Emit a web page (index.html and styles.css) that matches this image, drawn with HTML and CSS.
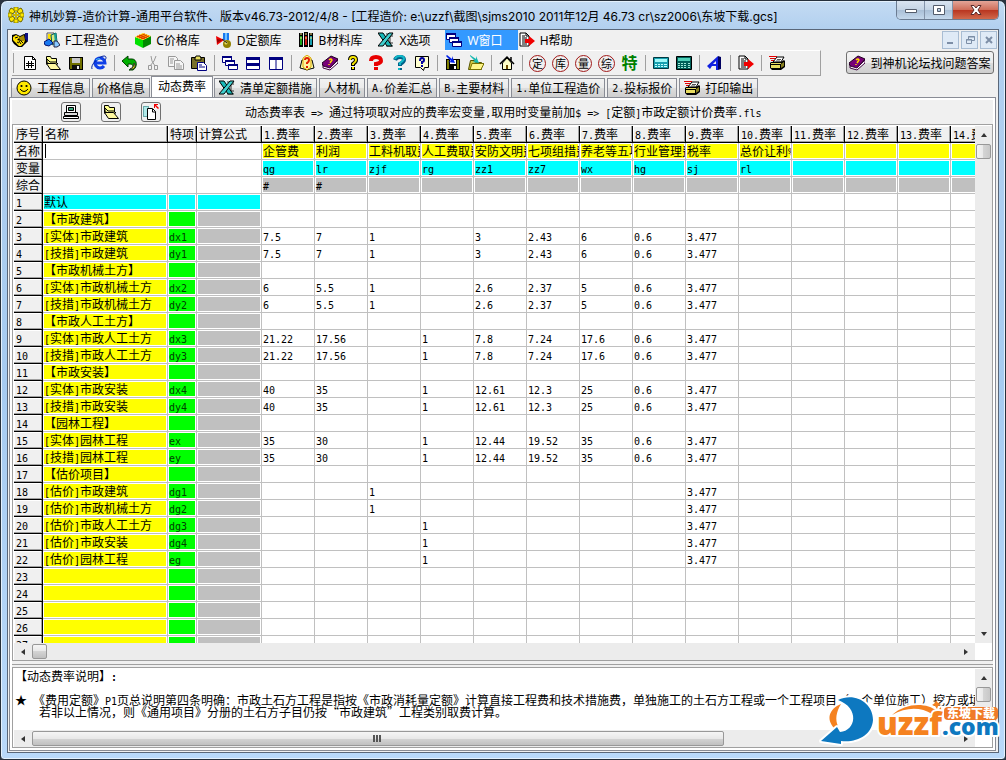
FILE: index.html
```html
<!DOCTYPE html>
<html lang="zh-CN">
<head>
  <meta charset="UTF-8">
  <title>神机妙算-造价计算</title>
  <link rel="stylesheet" href="styles.css">
</head>
<body>

<svg class="sprite" xmlns="http://www.w3.org/2000/svg">
  <symbol id="i-logo" viewBox="0 0 16 16"><g fill="#ffe800" stroke="#6b6500"><path d="M3 1l4 2-1 3-3 1-2-3zM9 3l4-2 2 3-2 3-3-1zM1 12l2-3 3 1 1 3-4 2zM10 10l3-1 2 3-2 3-4-2z"/></g><path d="M6 0h4v4H6zM6 12h4v4H6zM0 6h4v4H0zM12 6h4v4h-4z" fill="#ffe800" stroke="#8a8200"/><path d="M7 5h2v6H7zM5 7h6v2H5z" fill="#cdb900"/></symbol>
  <symbol id="i-hands" viewBox="0 0 16 16"><path d="M0 3l4-1 4 2 4-2 4 1v6l-3 3-3 3H6l-4-3-2-3z" fill="#000"/><path d="M1 5l3-2 4 2-3 3 4 1 4-1-1 3-3 3H7l-3-3-3-3z" fill="#ffe000"/><path d="M8 5l4-2 1 5-3 1-3-2z" fill="#a88c00"/><path d="M13 1h3v9l-3-3z" fill="#101080"/><path d="M5 10l2 1M7 9l2 3M9 9l2 2M3 6l3-1" stroke="#000"/></symbol>
  <symbol id="i-blocks" viewBox="0 0 16 16"><path d="M3 1h7v10H3z" fill="#fff" stroke="#555"/><path d="M4 2h3v8H4z" fill="#ffe000"/><path d="M7 3l5-2 1 9-5 3z" fill="#d8e880" stroke="#055"/><path d="M10 2l2-1 1 9-2 1z" fill="#18a098"/><path d="M0 10l5-3 4 4-4 3-4-1z" fill="#1878f0" stroke="#001070"/><path d="M10 9h3l3 4-3 2h-3z" fill="#88c8ff" stroke="#224"/></symbol>
  <symbol id="i-cube" viewBox="0 0 16 16"><path d="M0 5l8 3v8l-8-4z" fill="#00e000"/><path d="M8 8l8-4v8l-8 4z" fill="#008800"/><path d="M0 5l8-4 8 3-8 4z" fill="#ffcc00"/><path d="M2 5l8-3M4 6l8-3M6 7l8-3M4 3l8 3M2 4l8 3" stroke="#e03000"/></symbol>
  <symbol id="i-shapes" viewBox="0 0 16 16"><path d="M7 1h6v7H7z" fill="#1878f0"/><path d="M9 1h2v7H9z" fill="#70c0ff"/><path d="M0 4l8 4-7 5z" fill="#f00000"/><path d="M1 7l5 1-5 3z" fill="#900"/><circle cx="11" cy="12" r="4" fill="#908000"/><circle cx="10" cy="11" r="1.5" fill="#e8dc60"/><path d="M6 7l5 4" stroke="#222"/></symbol>
  <symbol id="i-books" viewBox="0 0 16 16"><path d="M1 1h4v14H1zM6 0h4v15H6zM11 1h4v14h-4z" fill="#000"/><path d="M2 4h2v9H2z" fill="#18a018"/><path d="M7 4h2v9H7z" fill="#d01010"/><path d="M12 4h2v9h-2z" fill="#18a0b0"/><path d="M2 2h2M7 2h2M12 2h2M2 6h2M7 6h2M12 6h2" fill="none" stroke="#ffe080"/></symbol>
  <symbol id="i-excel" viewBox="0 0 16 16"><path d="M5 1h10v2L9 8l6 5v2H5z" fill="#d8f4f4"/><path d="M8 2h7M9 4h6M10 11h5M8 14h7M12 2v11" stroke="#333"/><path d="M0 1h5l9 13H9z" fill="#18b8b8" stroke="#000"/><path d="M11 1h4L5 14H0z" fill="#40d0d0" stroke="#000"/></symbol>
  <symbol id="i-cascade" viewBox="0 0 16 16"><g fill="#fff" stroke="#000080"><path d="M.5 1.500h9v6h-9z"/><path d="M3.500 5.500h9v5h-9z"/><path d="M6.500 9.500h9v5h-9z"/></g><path d="M0 1h10v2H0zM3 5h10v2H3zM6 9h10v2H6z" fill="#000080"/></symbol>
  <symbol id="i-exit" viewBox="0 0 16 16"><path d="M1 1h6l3 3v10H1z" fill="#fff" stroke="#000"/><path d="M7 1v3h3M3 4h3M3 6h5M3 8h4M3 10h4M3 12h5" stroke="#000" fill="none"/><path d="M6 7h4V4l6 5-6 5v-3H6z" fill="#f00000"/></symbol>
  <symbol id="i-new" viewBox="0 0 16 16"><path d="M2.500 1.500h8l3 3v10h-11z" fill="#fff" stroke="#000"/><path d="M10.500 1v3.500h3M6.500 6v7M9.500 6v7M4 8.500h8M4 10.500h8" stroke="#000" fill="none"/></symbol>
  <symbol id="i-folder" viewBox="0 0 16 16"><path d="M1.500 9.500v-8h4l1 2h5v4" fill="#ffff90" stroke="#000"/><path d="M2 4l3 3h6l2 2H7L2 8z" fill="#ffff90" stroke="#000"/><path d="M5.500 14.500l-4-6h9l5 6z" fill="#fff8a0" stroke="#000"/></symbol>
  <symbol id="i-save" viewBox="0 0 16 16"><path d="M1 2h14v13H2l-1-1z" fill="#000"/><path d="M2 3h2v5h8V3h2v11H2z" fill="#707000"/><path d="M4 3h8v5H4z" fill="#c8c8c8"/><path d="M4 10h8v4H4z" fill="#111"/><path d="M9 11h2v3H9z" fill="#eee"/></symbol>
  <symbol id="i-ie" viewBox="0 0 16 16"><path d="M13 11a5 5 0 1 1 1-3H5" fill="none" stroke="#1040e8" stroke-width="3"/><path d="M1 14C-1 10 8 1 13 1c3 0 2 3 1 4" fill="none" stroke="#0020a0"/><path d="M5 5q2-2 4-1" stroke="#50d8ff" fill="none"/></symbol>
  <symbol id="i-undo" viewBox="0 0 16 16"><path d="M0 6l6-5v3h4c5 0 6 8 1 11H7c5-2 5-6 1-6H6v3z" fill="#00b000" stroke="#004000"/><path d="M12 8c2 3 1 5-1 6H8c3-1 4-3 4-6z" fill="#e8e000" stroke="#333"/></symbol>
  <symbol id="i-cut" viewBox="0 0 16 16"><g fill="none" stroke="#999"><path d="M6 1l1 5 3 5M11 1l-2 5-4 5"/><path d="M3.500 10.500h3v4h-3zM9.500 10.500h3v4h-3z"/></g></symbol>
  <symbol id="i-copy" viewBox="0 0 16 16"><g fill="#f5f5f5" stroke="#999"><path d="M.5 1.500h7l2 2v8h-9z"/><path d="M6.500 5.500h6l3 3v6h-9z"/><path d="M2 4h4M2 6h3M2 8h3M8 9h4M8 11h6M8 13h6"/></g></symbol>
  <symbol id="i-paste" viewBox="0 0 16 16"><path d="M.5 2.500h13v11H.5z" fill="#787028" stroke="#000"/><path d="M4 3l1-2h4l1 2v2H4z" fill="#e8e060" stroke="#000"/><path d="M6.500 7.500h6l3 3v5h-9z" fill="#fff" stroke="#000080"/><path d="M8 10h3M8 12h6" stroke="#000080"/></symbol>
  <symbol id="i-rows" viewBox="0 0 16 16"><path d="M1.500 2.500h13v12h-13z" fill="#fff" stroke="#000080"/><path d="M1 2h14v3H1zM1 8h14v3H1z" fill="#000080"/></symbol>
  <symbol id="i-cols" viewBox="0 0 16 16"><path d="M1.500 2.500h13v12h-13zM8 3v11" fill="#fff" stroke="#000080"/><path d="M1 2h14v3H1z" fill="#000080"/></symbol>
  <symbol id="i-bookq" viewBox="0 0 16 16"><path d="M1 13l2-8h2l3 8 3-8h2l2 8-4 1-3 1-3-1z" fill="#ffffb0" stroke="#000"/><path d="M4 12V3l4-3 4 3v9l-4 3z" fill="#fff6a0" stroke="#d8a800"/><path d="M6 5q0-2 2-2t2 2q0 2-2 3v1M8 11v2" stroke="#e02000" stroke-width="2" fill="none"/></symbol>
  <symbol id="i-book" viewBox="0 0 16 16"><path d="M0 8l9-7 7 3-8 9-7-2z" fill="#780078" stroke="#200020"/><path d="M1 11l7 2 8-8v3l-8 7-7-2z" fill="#fff" stroke="#400040"/><path d="M7 5q2-2 3 0L8 8M7 9v1" stroke="#ffd800" stroke-width="1.500" fill="none"/></symbol>
  <symbol id="i-q-yellow" viewBox="0 0 16 16"><path d="M5 5q0-3 3-3t3 3q0 2-3 4v2M8 12v3" fill="none" stroke="#000" stroke-width="4"/><path d="M5 5q0-3 3-3t3 3q0 2-3 4v1M8 12v2" fill="none" stroke="#f8e800" stroke-width="2"/></symbol>
  <symbol id="i-q-red" viewBox="0 0 16 16"><path d="M3 6q0-4 5-4t5 4q0 2-5 3v2M8 12v3" fill="none" stroke="#e80000" stroke-width="4"/></symbol>
  <symbol id="i-q-cyan" viewBox="0 0 16 16"><path d="M4 5q1-3 5-3t4 3q0 2-4 4v2M9 13v2" fill="none" stroke="#006088" stroke-width="4"/><path d="M4 4q1-3 5-3t4 3q-1 2-4 4v2M8 13v2" fill="none" stroke="#10b8c8" stroke-width="2"/></symbol>
  <symbol id="i-q-page" viewBox="0 0 16 16"><path d="M1.500 1.500h13v11h-4l-1 3-3-3h-5z" fill="#ffffd0" stroke="#000"/><path d="M6 6q0-3 2-3t2 2q0 2-2 2v2M8 10v2" fill="none" stroke="#0000a0" stroke-width="2"/></symbol>
  <symbol id="i-savein" viewBox="0 0 16 16"><path d="M1 4h14v11H1z" fill="#000"/><path d="M2 5h2v9H2zM12 5h2v9h-2z" fill="#808000"/><path d="M5 5h6v4H5z" fill="#fff"/><path d="M9 11h2v3H9z" fill="#fff"/><path d="M2 0l5 4V1l3 7-7-1 3-1-5-5z" fill="#0020e8"/></symbol>
  <symbol id="i-openin" viewBox="0 0 16 16"><path d="M0.500 14.500l2-9h4l1 2h6v7z" fill="#d8c840" stroke="#555500"/><path d="M2 14.500l2-6h12l-3 6z" fill="#fff68a" stroke="#777000"/><path d="M2 0l6 4V1l3 7-7-1 3-1-5-5z" fill="#18b8b0"/></symbol>
  <symbol id="i-home" viewBox="0 0 16 16"><path d="M3.500 8v6.500h9V8L8 3z" fill="#ffffc8" stroke="#000"/><path d="M1 9l7-7 7 7M12 2v4" fill="none" stroke="#000" stroke-width="1.500"/><path d="M7 10h2v4H7z" fill="#705000"/></symbol>
  <symbol id="i-calc-s" viewBox="0 0 16 16"><path d="M.5 2.500h15v11H.5z" fill="#18a0b0" stroke="#003840"/><path d="M2 4h12v3H2z" fill="#a0f8f8"/><path d="M2 9.500h2M5 9.500h2M8 9.500h2M11 9.500h3M2 11.500h2M5 11.500h2M8 11.500h2M11 11.500h3" stroke="#c0ffff"/></symbol>
  <symbol id="i-calc" viewBox="0 0 16 16"><path d="M.5 1.500h15v13H.5z" fill="#006058" stroke="#000"/><path d="M2 3h12v3H2z" fill="#50d0b8"/><path d="M2 8.500h2M5 8.500h2M8 8.500h2M12 8.500h2M2 10.500h2M5 10.500h2M8 10.500h2M12 10.500h2M2 12.500h2M5 12.500h2M8 12.500h2M12 12.500h2" stroke="#a0e8d8"/></symbol>
  <symbol id="i-a" viewBox="0 0 16 16"><path d="M0 11L11 1v14H9v-4H5l-2 3z" fill="#1020e0"/><path d="M11 1l3 1v12l-3 1z" fill="#000060"/><path d="M6 9l3-3v3z" fill="#f0f0f0"/></symbol>
  <symbol id="i-print" viewBox="0 0 16 16"><path d="M0 1.500h8M1 3.500h6M2 5.500h4" stroke="#e00000"/><path d="M4 7l4-5h7l-3 5z" fill="#fff" stroke="#000"/><path d="M8 4.500h4M7 6h4" stroke="#555"/><path d="M2 7h10l3-2 1 1v6l-4 3H3l-2-2V8z" fill="#000"/><path d="M2 8h10v1H2zM2 10h9v3H2z" fill="#e8dc60"/><path d="M12 9l3-2v4l-3 2z" fill="#888020"/></symbol>
  <symbol id="i-smile" viewBox="0 0 16 16"><circle cx="8" cy="8" r="7" fill="#ffe800" stroke="#000"/><circle cx="5.500" cy="6" r="1.100"/><circle cx="10.500" cy="6" r="1.100"/><path d="M4 9q4 5 8 0" fill="none" stroke="#000"/></symbol>
  <symbol id="i-printer" viewBox="0 0 16 16"><path d="M3.500 1.500h9v7h-9z" fill="#fff" stroke="#000"/><path d="M5.500 3.500h5v3h-5z" fill="#40a880" stroke="#000"/><path d="M1.500 8.500h13v3h-13z" fill="#ddd" stroke="#000"/><path d="M.5 12.500h15v2H.5z" fill="#fff" stroke="#000"/></symbol>
  <symbol id="i-pages" viewBox="0 0 16 16"><path d="M.5 2.500h5v10h-5z" fill="#b0e8e8" stroke="#066" stroke-dasharray="1 1"/><path d="M4.500 4.500h5l3 3v8h-8z" fill="#fff" stroke="#000"/><path d="M9.500 5v3h3" fill="none" stroke="#000"/><path d="M11 0h4v1h-2l3 3-1 1-3-3v2h-1z" fill="#f00000"/></symbol>
</svg>

<div class="window">
  <header class="titlebar">
    <svg class="icon"><use href="#i-logo"/></svg>
    <h1>神机妙算-造价计算-通用平台软件、版本v46.73-2012/4/8 - [工程造价: e:\uzzf\截图\sjms2010 2011年12月 46.73 cr\sz2006\东坡下载.gcs]</h1>
    <div class="caption">
      <button aria-label="最小化"><svg viewBox="0 0 14 12"><path d="M1.500 5.500h11v3h-11z" fill="#fff" stroke="#535c6b"/></svg></button>
      <button aria-label="最大化"><svg viewBox="0 0 14 12"><path d="M1.500 1.500h11v9h-11zM5.500 4.500h3v3h-3z" fill="#fff" stroke="#535c6b" fill-rule="evenodd"/></svg></button>
      <button class="close" aria-label="关闭"><svg viewBox="0 0 14 12"><path d="M2 1.500h3l2 2.500 2-2.500h3L9 6l3 4.500H9L7 8l-2 2.500H2L5 6z" fill="#fff" stroke="#5b2a2a"/></svg></button>
    </div>
  </header>

  <main class="client">
    <nav class="menu">
      <button aria-label="系统"><svg class="icon"><use href="#i-hands"/></svg></button>
      <button><svg class="icon"><use href="#i-blocks"/></svg>F工程造价</button>
      <button><svg class="icon"><use href="#i-cube"/></svg>C价格库</button>
      <button><svg class="icon"><use href="#i-shapes"/></svg>D定额库</button>
      <button><svg class="icon"><use href="#i-books"/></svg>B材料库</button>
      <button><svg class="icon"><use href="#i-excel"/></svg>X选项</button>
      <button class="open"><svg class="icon"><use href="#i-cascade"/></svg>W窗口</button>
      <button><svg class="icon"><use href="#i-exit"/></svg>H帮助</button>
      <div class="mdi">
        <button aria-label="最小化子窗口"><svg viewBox="0 0 10 10"><path d="M1 7h6v2H1z" fill="#7d8ea6"/></svg></button>
        <button aria-label="还原子窗口"><svg viewBox="0 0 10 10"><path d="M3.500 4V1.500h6v4H7M3 2h7M1.500 4.500h5v4h-5zM1 5h6" fill="none" stroke="#7d8ea6"/></svg></button>
        <button aria-label="关闭子窗口"><svg viewBox="0 0 10 10"><path d="M2 2l6 6M8 2L2 8" fill="none" stroke="#7d8ea6" stroke-width="2"/></svg></button>
      </div>
    </nav>

    <div class="toolrow">
      <div class="toolbar">
        <button aria-label="新建"><svg class="icon"><use href="#i-new"/></svg></button>
        <button aria-label="打开"><svg class="icon"><use href="#i-folder"/></svg></button>
        <button aria-label="保存"><svg class="icon"><use href="#i-save"/></svg></button>
        <button aria-label="浏览器"><svg class="icon"><use href="#i-ie"/></svg></button>
        <span class="sep"></span>
        <button aria-label="撤销"><svg class="icon"><use href="#i-undo"/></svg></button>
        <button aria-label="剪切"><svg class="icon"><use href="#i-cut"/></svg></button>
        <button aria-label="复制"><svg class="icon"><use href="#i-copy"/></svg></button>
        <button aria-label="粘贴"><svg class="icon"><use href="#i-paste"/></svg></button>
        <span class="sep"></span>
        <button aria-label="层叠"><svg class="icon"><use href="#i-cascade"/></svg></button>
        <button aria-label="横排"><svg class="icon"><use href="#i-rows"/></svg></button>
        <button aria-label="竖排"><svg class="icon"><use href="#i-cols"/></svg></button>
        <span class="sep"></span>
        <button aria-label="教程"><svg class="icon"><use href="#i-bookq"/></svg></button>
        <button aria-label="手册"><svg class="icon"><use href="#i-book"/></svg></button>
        <button aria-label="提示"><svg class="icon"><use href="#i-q-yellow"/></svg></button>
        <button aria-label="疑问"><svg class="icon"><use href="#i-q-red"/></svg></button>
        <button aria-label="帮助"><svg class="icon"><use href="#i-q-cyan"/></svg></button>
        <button aria-label="说明"><svg class="icon"><use href="#i-q-page"/></svg></button>
        <span class="sep"></span>
        <button aria-label="存入"><svg class="icon"><use href="#i-savein"/></svg></button>
        <button aria-label="取出"><svg class="icon"><use href="#i-openin"/></svg></button>
        <span class="sep"></span>
        <button aria-label="主页"><svg class="icon"><use href="#i-home"/></svg></button>
        <span class="sep"></span>
        <button><span class="stamp">定</span></button>
        <button><span class="stamp">库</span></button>
        <button><span class="stamp">量</span></button>
        <button><span class="stamp">综</span></button>
        <button><span class="special">特</span></button>
        <span class="sep"></span>
        <button aria-label="小计算器"><svg class="icon"><use href="#i-calc-s"/></svg></button>
        <button aria-label="计算器"><svg class="icon"><use href="#i-calc"/></svg></button>
        <span class="sep"></span>
        <button aria-label="字体"><svg class="icon"><use href="#i-a"/></svg></button>
        <span class="sep"></span>
        <button aria-label="退出"><svg class="icon"><use href="#i-exit"/></svg></button>
        <span class="sep"></span>
        <button aria-label="打印"><svg class="icon"><use href="#i-print"/></svg></button>
      </div>
      <button class="forum"><svg class="icon"><use href="#i-book"/></svg>到神机论坛找问题答案</button>
    </div>

    <div class="tabs">
      <button><svg class="icon"><use href="#i-smile"/></svg>工程信息</button>
      <button>价格信息</button>
      <button class="active">动态费率</button>
      <button><svg class="icon"><use href="#i-excel"/></svg>清单定额措施</button>
      <button>人材机</button>
      <button><span class="half">A.</span>价差汇总</button>
      <button><span class="half">B.</span>主要材料</button>
      <button><span class="half">1.</span>单位工程造价</button>
      <button><span class="half">2.</span>投标报价</button>
      <button><svg class="icon"><use href="#i-print"/></svg>打印输出</button>
    </div>

    <section class="page">
      <div class="pagebar">
        <button aria-label="打印费率"><svg class="icon"><use href="#i-printer"/></svg></button>
        <button aria-label="打开费率"><svg class="icon"><use href="#i-folder"/></svg></button>
        <button aria-label="复制费率"><svg class="icon"><use href="#i-pages"/></svg></button>
        <p>动态费率表<span class="half"> =&gt; </span>通过特项取对应的费率宏变量<span class="half">,</span>取用时变量前加<span class="half">$ =&gt; [</span>定额<span class="half">]</span>市政定额计价费率<span class="half">.fls</span></p>
      </div>

      <div class="panel gridpanel">
        <div class="view"><table id="rates"></table></div>
        <div class="vscroll">
          <button class="up" aria-label="上"></button><i class="thumb"></i><button class="down" aria-label="下"></button>
        </div>
        <div class="hscroll">
          <button class="left" aria-label="左"></button><i class="thumb"></i><button class="right" aria-label="右"></button>
        </div>
      </div>

      <div class="splitter"></div>

      <div class="panel notes">
        <div class="view text"><p>【动态费率说明】<b class="half">:</b></p>
          <p class="gap">★<span class="half"> </span>《费用定额》<span class="half">P1</span>页总说明第四条明确：市政土石方工程是指按《市政消耗量定额》计算直接工程费和技术措施费，单独施工的土石方工程或一个工程项目（一个单位施工）挖方或填方</p>
          <p><span class="half">    </span>若非以上情况，则《通用项目》分册的土石方子目仍按“市政建筑”工程类别取费计算。</p>
        </div>
        <div class="vscroll">
          <button class="up" aria-label="上"></button><i class="thumb"></i><button class="down" aria-label="下"></button>
        </div>
        <div class="hscroll">
          <button class="left" aria-label="左"></button><i class="thumb wide"></i><button class="right" aria-label="右"></button>
        </div>
      </div>
    </section>
  </main>

  <a class="watermark" href="#" aria-label="uzzf.com">
    <svg viewBox="0 0 186 60">
      <g stroke="#fff" stroke-width="4" stroke-linejoin="round" paint-order="stroke">
        <path d="M17 39C9 30 12 20 24 15C19 23 18 31 21 37z" fill="#f58220"/>
        <path d="M21 11C38 3 56 14 56 31C55 46 40 54 24 52L24 55L4 52L20 38L23 43C39 42 43 19 21 11z" fill="#0d78c0"/>
        <path d="M75 26C88 14 109 13 120 22L124 18L125 30L111 29L115 25C104 18 89 18 75 26z" fill="#f58220"/>
      </g>
      <path d="M25 37C33 32 34 22 27 15C37 22 38 32 25 37z" fill="#fff"/>
      <text x="60" y="46" class="wm-orange">uzzf</text>
      <text x="125" y="46" class="wm-blue">.com</text>
      <rect x="127" y="18" width="54" height="13" rx="4" fill="#f07a28"/>
      <text x="130" y="29" class="wm-cn">东坡下载</text>
      <path d="M119 11l2 3 3 1-3 2-1 3-2-3-3-1 3-2z" fill="#f58220"/>
    </svg>
  </a>
</div>

<script src="grid.js"></script>
</body>
</html>
```
FILE: styles.css
```css
* {
  box-sizing: border-box;
}

body {
  margin: 0;
  background: #2b3340;
  font-family: "Noto Sans", "Noto Sans CJK SC", sans-serif;
  font-size: 12px;
  color: #000;
}

button {
  font: inherit;
  color: inherit;
  margin: 0;
  padding: 0;
  border: 0;
  background: none;
  display: flex;
  align-items: center;
  justify-content: center;
  white-space: nowrap;
}

p {
  margin: 0;
}

.sprite {
  display: none;
}

.icon {
  width: 16px;
  height: 16px;
  flex: none;
}

.half {
  font-family: "DejaVu Sans Mono", monospace;
  font-size: 10px;
  white-space: pre;
}

/* window frame */
.window {
  position: relative;
  display: flex;
  flex-direction: column;
  height: 100vh;
  padding: 0 6px 6px;
  border: 1px solid #26303c;
  border-radius: 7px 7px 4px 4px;
  background: linear-gradient(#c4dbf3, #b2d0ef 28px, #a6cbf1 50%, #b9d9fa);
  box-shadow: inset 0 0 0 1px #e4f1fd;
}

.titlebar {
  display: flex;
  align-items: center;
  height: 28px;
  flex: none;
  padding-left: 1px;
}

.titlebar h1 {
  flex: 1;
  min-width: 0;
  margin: 0 0 0 5px;
  font-family: Inter, "Noto Sans CJK SC", sans-serif;
  font-size: 12px;
  font-weight: normal;
  white-space: nowrap;
  overflow: hidden;
}

.caption {
  display: flex;
  align-self: flex-start;
  height: 19px;
  border: 1px solid #6b7c92;
  border-top: 0;
  border-radius: 0 0 5px 5px;
  overflow: hidden;
}

.caption button {
  width: 28px;
  border-right: 1px solid #8494aa;
  background: linear-gradient(#d9e4f0, #c3d3e4 50%, #a9bfd6 50%, #c4d8ec);
}

.caption svg {
  width: 14px;
  height: 12px;
}

.caption .close {
  width: 45px;
  border: 0;
  background: linear-gradient(#e3a598, #cf6c58 50%, #b8341f 50%, #d0694c);
}

.client {
  flex: 1;
  min-height: 0;
  display: flex;
  flex-direction: column;
  border: 1px solid #5a6779;
  background: #f0f0f0;
}

/* menu */
.menu {
  display: flex;
  height: 20px;
  flex: none;
  padding-left: 3px;
}

.menu > button {
  gap: 5px;
  padding: 0 15px 0 1px;
}

.menu .open {
  background: #3399ff;
  color: #fff;
}

.mdi {
  display: flex;
  gap: 2px;
  margin: 1px 1px 1px auto;
}

.mdi button {
  width: 17px;
  border: 1px solid #a9bdd3;
  background: #dfeaf6;
}

.mdi svg {
  width: 10px;
  height: 10px;
}

/* toolbar */
.toolrow {
  display: flex;
  justify-content: space-between;
  height: 26px;
  flex: none;
  padding: 0 4px;
}

.toolbar {
  display: flex;
  width: 809px;
  padding-left: 6px;
  border-top: 1px solid #fff;
  border-right: 1px solid #a0a0a0;
  border-bottom: 1px solid #a0a0a0;
  position: relative;
}

.toolbar::before {
  content: "";
  width: 1px;
  height: 20px;
  position: absolute;
  left: 1px;
  top: 2px;
  background: #a0a0a0;
}

.toolbar button {
  width: 23px;
}

.sep {
  width: 8px;
  margin: 4px 0;
  background: linear-gradient(#a0a0a0, #a0a0a0) 4px 0 / 1px 100% no-repeat;
}

.stamp {
  width: 17px;
  height: 17px;
  border: 1px solid #a01818;
  border-radius: 50%;
  font-size: 11px;
  line-height: 15px;
}

.special {
  color: #008000;
  font-size: 16px;
  line-height: 18px;
  font-weight: bold;
}

.forum {
  width: 148px;
  height: 23px;
  gap: 5px;
  margin-top: 1px;
  border: 1px solid #707070;
  border-radius: 3px;
  background: linear-gradient(#f4f4f4, #ebebeb 50%, #dddddd 50%, #cfcfcf);
}

/* tabs */
.tabs {
  display: flex;
  align-items: flex-end;
  gap: 2px;
  height: 21px;
  flex: none;
  padding-left: 3px;
}

.tabs button {
  height: 19px;
  padding: 0 4px;
  border: 1px solid #898c95;
  border-bottom: 0;
  background: linear-gradient(#f2f2f2, #ebebeb 50%, #dddddd 50%, #cfcfcf);
}

.tabs .icon {
  margin-right: 5px;
}

.tabs .active {
  height: 21px;
  margin: 0 -1px;
  padding: 0 6px 2px;
  background: #fff;
}

/* page */
.page {
  flex: 1;
  min-height: 0;
  display: flex;
  flex-direction: column;
  margin: 0 2px 1px 1px;
  padding: 2px;
  border: 1px solid #898c95;
  background: #fff;
}

.pagebar {
  display: flex;
  align-items: center;
  gap: 20px;
  height: 24px;
  flex: none;
  padding-left: 49px;
  background: #f0f0f0;
}

.pagebar button {
  width: 20px;
  height: 20px;
  border: 1px solid #707070;
  border-radius: 3px;
}

.pagebar p {
  margin-left: 64px;
  white-space: nowrap;
}

.panel {
  display: grid;
  grid-template-columns: minmax(0, 1fr) 17px;
  grid-template-rows: minmax(0, 1fr) 17px;
  padding: 1px 0 0 1px;
  border: 1px solid #a0a0a0;
  background: #fff;
}

.gridpanel {
  flex: 1;
  min-height: 0;
}

.view {
  overflow: hidden;
}

.splitter {
  height: 6px;
  flex: none;
  border-top: 3px solid #f0f0f0;
  border-bottom: 2px solid #f0f0f0;
  background: #a0a0a0;
}

.notes {
  height: 81px;
  flex: none;
}

.text {
  padding: 1px;
  font-family: "Noto Sans CJK SC", sans-serif;
  line-height: 12px;
  text-spacing-trim: space-all;
  white-space: nowrap;
}

.text p {
  height: 12px;
}

.text .gap {
  margin-top: 12px;
}

/* rate table */
#rates {
  table-layout: fixed;
  width: 990px;
  border-collapse: separate;
  border-spacing: 0;
  font-family: "Noto Sans CJK SC", sans-serif;
  text-spacing-trim: space-all;
}

.c-no { width: 29px; }
.c-name { width: 125px; }
.c-item { width: 29px; }
.c-formula { width: 65px; }
.c-rate { width: 53px; }

#rates th,
#rates td {
  height: 17px;
  padding: 1px;
  border-right: 1px solid #c0c0c0;
  border-bottom: 1px solid #c0c0c0;
  background-clip: content-box;
  font-weight: normal;
  line-height: 14px;
  text-align: left;
  white-space: nowrap;
  overflow: hidden;
}

#rates div {
  height: 14px;
}

#rates th {
  padding-left: 2px;
  border-color: #000;
  background: #f0f0f0;
  box-shadow: inset -1px -1px #a0a0a0, inset 1px 1px #fff;
}

#rates .yellow { background-color: #ff0; }
#rates .cyan { background-color: #0ff; }
#rates .green { background-color: #0f0; color: #004000; }
#rates .gray { background-color: #c0c0c0; }

#rates input {
  display: block;
  width: 100%;
  height: 14px;
  padding: 0;
  border: 0;
  border-left: 1px solid #000;
  margin-left: 1px;
  outline: 0;
  font: inherit;
}

/* scrollbars */
.vscroll,
.hscroll {
  display: flex;
  background: #ececec;
}

.vscroll {
  flex-direction: column;
  padding: 0 1px;
}

.vscroll button { height: 18px; }
.hscroll button { width: 18px; }
.vscroll .down { margin-top: auto; }
.hscroll .right { margin-left: auto; }

.vscroll button::before,
.hscroll button::before {
  content: "";
  border: 3px solid transparent;
}

.vscroll .up::before { border-top: 0; border-bottom: 4px solid #333; }
.vscroll .down::before { border-bottom: 0; border-top: 4px solid #333; }
.hscroll .left::before { border-left: 0; border-right: 4px solid #333; }
.hscroll .right::before { border-right: 0; border-left: 4px solid #333; }

.thumb {
  display: flex;
  align-items: center;
  justify-content: center;
  width: 15px;
  height: 15px;
  border: 1px solid #989898;
  border-radius: 2px;
  background: linear-gradient(90deg, #f5f5f5, #e8e8e8 50%, #d4d4d4 50%, #c8c8c8);
}

.hscroll .thumb {
  margin-top: 1px;
  background: linear-gradient(#f5f5f5, #e8e8e8 50%, #d4d4d4 50%, #c0c0c0);
}

.hscroll .wide {
  width: 72%;
}

.wide::before {
  content: "";
  width: 9px;
  height: 7px;
  background: repeating-linear-gradient(90deg, #555 0 2px, transparent 2px 3px);
}

/* site mark over the corner */
.watermark {
  position: absolute;
  right: 2px;
  bottom: 10px;
  width: 186px;
  height: 60px;
}

.watermark svg {
  display: block;
  overflow: visible;
}

.watermark text {
  font-family: "Open Sans", sans-serif;
  font-size: 31px;
  font-weight: 800;
  stroke: #fff;
  stroke-width: 4px;
  stroke-linejoin: round;
  paint-order: stroke;
}

.watermark .wm-orange { fill: #f58220; }
.watermark .wm-blue { fill: #0d78c0; font-size: 23px; }

.watermark .wm-cn {
  fill: #fff;
  stroke: none;
  font-family: "Noto Sans CJK SC", sans-serif;
  font-size: 12px;
}
```
FILE: grid.js
```js
const RATE_COLS = 14;
const ROWS = 27;

// leading rows under the header: label, fill, values
const heads = [
  ["名称", "yellow", ["企管费", "利润", "工料机取费", "人工费取费", "安防文明费", "七项组措费", "养老等五项", "行业管理费", "税率", "总价让利%"]],
  ["变量", "cyan", ["qg", "lr", "zjf", "rg", "zz1", "zz7", "wx", "hg", "sj", "rl"]],
  ["综合", "gray", ["#", "#"]]
];

const shiti = (a, b, c, d, e, f, g) => [a, b, c, d, e, f, g, "0.6", "3.477"];

const rows = [
  ["默认", "", []],
  ["【市政建筑】", "", []],
  ["[实体]市政建筑", "dx1", shiti("7.5", "7", "1", "", "3", "2.43", "6")],
  ["[技措]市政建筑", "dy1", shiti("7.5", "7", "1", "", "3", "2.43", "6")],
  ["【市政机械土方】", "", []],
  ["[实体]市政机械土方", "dx2", shiti("6", "5.5", "1", "", "2.6", "2.37", "5")],
  ["[技措]市政机械土方", "dy2", shiti("6", "5.5", "1", "", "2.6", "2.37", "5")],
  ["【市政人工土方】", "", []],
  ["[实体]市政人工土方", "dx3", shiti("21.22", "17.56", "", "1", "7.8", "7.24", "17.6")],
  ["[技措]市政人工土方", "dy3", shiti("21.22", "17.56", "", "1", "7.8", "7.24", "17.6")],
  ["【市政安装】", "", []],
  ["[实体]市政安装", "dx4", shiti("40", "35", "", "1", "12.61", "12.3", "25")],
  ["[技措]市政安装", "dy4", shiti("40", "35", "", "1", "12.61", "12.3", "25")],
  ["【园林工程】", "", []],
  ["[实体]园林工程", "ex", shiti("35", "30", "", "1", "12.44", "19.52", "35")],
  ["[技措]园林工程", "ey", shiti("35", "30", "", "1", "12.44", "19.52", "35")],
  ["【估价项目】", "", []],
  ["[估价]市政建筑", "dg1", ["", "", "1", "", "", "", "", "", "3.477"]],
  ["[估价]市政机械土方", "dg2", ["", "", "1", "", "", "", "", "", "3.477"]],
  ["[估价]市政人工土方", "dg3", ["", "", "", "1", "", "", "", "", "3.477"]],
  ["[估价]市政安装", "dg4", ["", "", "", "1", "", "", "", "", "3.477"]],
  ["[估价]园林工程", "eg", ["", "", "", "1", "", "", "", "", "3.477"]]
];

// ascii runs take half the width of a hanzi
function half(text) {
  return String(text).replace(/[\x20-\x7e]+/g, '<span class="half">$&</span>');
}

function cell(text, fill) {
  return `<td class="${fill || ""}"><div>${half(text || "")}</div></td>`;
}

function head(text, scope) {
  return `<th scope="${scope}"><div>${half(text)}</div></th>`;
}

function rates(values, fill) {
  let out = "";
  for (let i = 0; i < RATE_COLS; i++) out += cell(values[i], fill);
  return out;
}

let html = '<colgroup><col class="c-no"><col class="c-name"><col class="c-item"><col class="c-formula">';
html += `<col class="c-rate" span="${RATE_COLS}"></colgroup><thead><tr>`;
html += ["序号", "名称", "特项", "计算公式"].map(t => head(t, "col")).join("");
for (let i = 1; i <= RATE_COLS; i++) html += head(i + ".费率", "col");
html += "</tr></thead><tbody>";

heads.forEach(([label, fill, values], i) => {
  const first = i === 0 ? '<td><input type="text" aria-label="名称"></td>' : cell();
  html += `<tr>${head(label, "row")}${first}${cell()}${cell()}${rates(values, fill)}</tr>`;
});

for (let n = 1; n <= ROWS; n++) {
  const [name, item, values] = rows[n - 1] || ["", "", []];
  const fills = n === 1 ? ["cyan", "cyan", "cyan"] : ["yellow", "green", "gray"];
  html += `<tr>${head(n, "row")}${cell(name, fills[0])}${cell(item, fills[1])}${cell("", fills[2])}${rates(values)}</tr>`;
}

document.getElementById("rates").innerHTML = html + "</tbody>";
```
